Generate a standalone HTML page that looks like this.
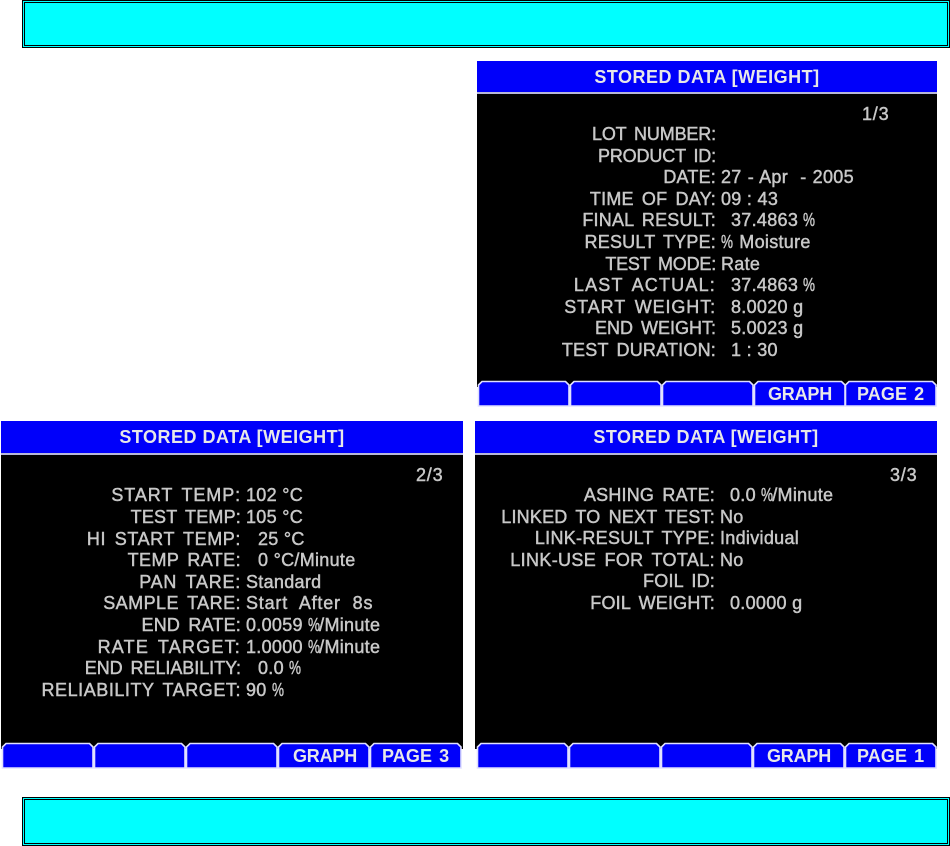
<!DOCTYPE html>
<html><head><meta charset="utf-8">
<style>
html,body{margin:0;padding:0;background:#fff;}
body{width:950px;height:846px;position:relative;overflow:hidden;font-family:"Liberation Sans",sans-serif;}
.b{position:absolute;box-sizing:border-box;left:22px;width:928px;background:#0ff;border:3px double #000;}
.p{position:absolute;background:#000;}
.h{position:absolute;left:0;right:0;top:0;height:31px;background:#0000fa;border-bottom:2px solid #b8b8d8;color:#e8e8e8;font-weight:bold;font-size:18px;line-height:33px;text-align:center;letter-spacing:.5px;}
svg{position:absolute;left:0;top:0;}
.l,.v,.t{position:absolute;white-space:pre;font-size:18px;line-height:20px;color:#c8c8c8;-webkit-text-stroke:.45px #c8c8c8;}
.l{text-align:right;letter-spacing:.2px;word-spacing:3px;}
.v{letter-spacing:.3px;}
.t{color:#e8e8e8;font-weight:bold;letter-spacing:.1px;word-spacing:2px;-webkit-text-stroke:0;}
.v i{display:inline-block;font-style:normal;width:11px;transform:scaleX(.75);transform-origin:0 50%;}
</style></head><body>
<div class="b" style="top:0;height:48px"></div>
<div class="b" style="top:797px;height:49px"></div>

<div class="p" style="left:477px;top:61px;width:460px;height:346px"><div class="h">STORED DATA [WEIGHT]</div></div>
<div class="p" style="left:1px;top:421px;width:462px;height:348px"><div class="h" style="height:32px">STORED DATA [WEIGHT]</div></div>
<div class="p" style="left:475px;top:421px;width:462px;height:348px"><div class="h" style="height:32px">STORED DATA [WEIGHT]</div></div>

<svg width="950" height="846" viewBox="0 0 950 846">
<defs><path id="tb" d="M.5 25V4L4 .5H87.5L91 4V25Z" fill="#0000fa" stroke="#e0e0ff" stroke-width="1.6"/></defs>
<rect x="477" y="381" width="460" height="26" fill="#fff"/>
<rect x="477" y="381" width="460" height="6" fill="#000"/>
<use href="#tb" x="478" y="381"/><use href="#tb" x="570" y="381"/><use href="#tb" x="662" y="381"/><use href="#tb" x="754" y="381"/><use href="#tb" x="845" y="381"/>
<rect x="1" y="743" width="462" height="26" fill="#fff"/>
<rect x="1" y="743" width="462" height="6" fill="#000"/>
<use href="#tb" x="2" y="743"/><use href="#tb" x="94" y="743"/><use href="#tb" x="186" y="743"/><use href="#tb" x="278" y="743"/><use href="#tb" x="370" y="743"/>
<rect x="475" y="743" width="462" height="26" fill="#fff"/>
<rect x="475" y="743" width="462" height="6" fill="#000"/>
<use href="#tb" x="477" y="743"/><use href="#tb" x="569" y="743"/><use href="#tb" x="661" y="743"/><use href="#tb" x="753" y="743"/><use href="#tb" x="845" y="743"/>
</svg>

<div class="t" style="left:768px;top:384px;letter-spacing:-.2px">GRAPH</div><div class="t" style="left:857px;top:384px">PAGE 2</div>
<div class="t" style="left:293px;top:746px;letter-spacing:-.2px">GRAPH</div><div class="t" style="left:382px;top:746px">PAGE 3</div>
<div class="t" style="left:767px;top:746px;letter-spacing:-.2px">GRAPH</div><div class="t" style="left:857px;top:746px">PAGE 1</div>

<div class="v" style="left:862px;top:104px;letter-spacing:.8px">1/3</div>
<div class="l" style="right:234px;top:124px;letter-spacing:-.15px">LOT NUMBER:</div>
<div class="l" style="right:234px;top:146px;letter-spacing:-.15px">PRODUCT ID:</div>
<div class="l" style="right:234px;top:167px">DATE:</div><div class="v" style="left:721px;top:167px;word-spacing:.8px">27 - Apr  - 2005</div>
<div class="l" style="right:234px;top:189px">TIME OF DAY:</div><div class="v" style="left:721px;top:189px">09 : 43</div>
<div class="l" style="right:234px;top:210px">FINAL RESULT:</div><div class="v" style="left:731px;top:210px">37.4863 <i>%</i></div>
<div class="l" style="right:234px;top:232px">RESULT TYPE:</div><div class="v" style="left:721px;top:232px;word-spacing:2px"><i>%</i> Moisture</div>
<div class="l" style="right:234px;top:254px;letter-spacing:-.2px">TEST MODE:</div><div class="v" style="left:721px;top:254px">Rate</div>
<div class="l" style="right:234px;top:275px;letter-spacing:1.2px">LAST ACTUAL:</div><div class="v" style="left:731px;top:275px">37.4863 <i>%</i></div>
<div class="l" style="right:234px;top:297px;letter-spacing:.9px">START WEIGHT:</div><div class="v" style="left:731px;top:297px">8.0020 g</div>
<div class="l" style="right:234px;top:318px;letter-spacing:0">END WEIGHT:</div><div class="v" style="left:731px;top:318px">5.0023 g</div>
<div class="l" style="right:234px;top:340px">TEST DURATION:</div><div class="v" style="left:731px;top:340px">1 : 30</div>

<div class="v" style="left:416px;top:465px;letter-spacing:.8px">2/3</div>
<div class="l" style="right:709px;top:485px;letter-spacing:.9px">START TEMP:</div><div class="v" style="left:246px;top:485px">102 °C</div>
<div class="l" style="right:709px;top:507px">TEST TEMP:</div><div class="v" style="left:246px;top:507px">105 °C</div>
<div class="l" style="right:709px;top:529px;letter-spacing:.6px">HI START TEMP:</div><div class="v" style="left:258px;top:529px">25 °C</div>
<div class="l" style="right:709px;top:550px;letter-spacing:.4px">TEMP RATE:</div><div class="v" style="left:258px;top:550px">0 °C/Minute</div>
<div class="l" style="right:709px;top:572px;letter-spacing:.75px">PAN TARE:</div><div class="v" style="left:246px;top:572px">Standard</div>
<div class="l" style="right:709px;top:593px;letter-spacing:.45px">SAMPLE TARE:</div><div class="v" style="left:246px;top:593px;letter-spacing:.8px;word-spacing:6px">Start After 8s</div>
<div class="l" style="right:709px;top:615px">END RATE:</div><div class="v" style="left:246px;top:615px">0.0059 <i>%</i>/Minute</div>
<div class="l" style="right:709px;top:637px;letter-spacing:1.2px">RATE TARGET:</div><div class="v" style="left:246px;top:637px">1.0000 <i>%</i>/Minute</div>
<div class="l" style="right:709px;top:658px;letter-spacing:-.05px">END RELIABILITY:</div><div class="v" style="left:258px;top:658px">0.0 <i>%</i></div>
<div class="l" style="right:709px;top:680px;letter-spacing:.55px">RELIABILITY TARGET:</div><div class="v" style="left:246px;top:680px">90 <i>%</i></div>

<div class="v" style="left:890px;top:465px;letter-spacing:.8px">3/3</div>
<div class="l" style="right:235px;top:485px">ASHING RATE:</div><div class="v" style="left:730px;top:485px">0.0 <i>%</i>/Minute</div>
<div class="l" style="right:235px;top:507px">LINKED TO NEXT TEST:</div><div class="v" style="left:720px;top:507px">No</div>
<div class="l" style="right:235px;top:528px;letter-spacing:.3px">LINK-RESULT TYPE:</div><div class="v" style="left:720px;top:528px">Individual</div>
<div class="l" style="right:235px;top:550px;letter-spacing:.35px">LINK-USE FOR TOTAL:</div><div class="v" style="left:720px;top:550px">No</div>
<div class="l" style="right:235px;top:571px">FOIL ID:</div>
<div class="l" style="right:235px;top:593px">FOIL WEIGHT:</div><div class="v" style="left:730px;top:593px">0.0000 g</div>
</body></html>
